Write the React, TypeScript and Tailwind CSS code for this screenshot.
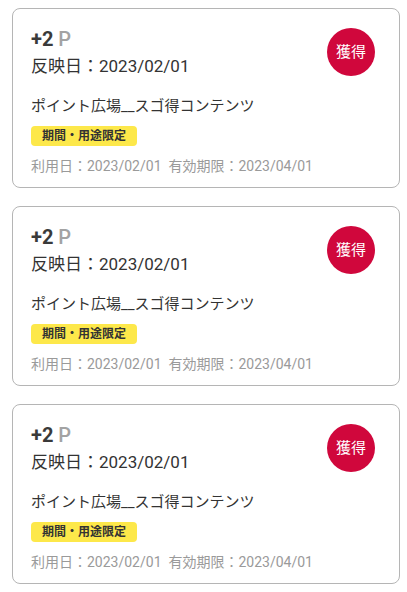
const items = [0, 1, 2].map(() => ({
  point: '+2',
  reflectDate: '2023/02/01',
  title: 'ポイント広場__スゴ得コンテンツ',
  tag: '期間・用途限定',
  useDate: '2023/02/01',
  expire: '2023/04/01',
}));

export default function App() {
  return (
    <div
      className="min-h-[592px] bg-white pl-3 pr-[7px] pt-2 flex flex-col gap-[18px]"
      style={{ fontFamily: 'Roboto, "Noto Sans CJK JP", sans-serif' }}
    >
      {items.map((item, idx) => (
        <div
          key={idx}
          className="h-[180px] rounded-lg border border-[#b5b5b5] pl-[18px] pr-6 pt-4 flex justify-between"
        >
          <div className="flex flex-col">
            <div className="text-[20px] leading-[28px] font-bold text-[#3a3a3a]">
              {item.point} <span className="text-[#a3a3a3] font-medium">P</span>
            </div>
            <div className="text-[17px] leading-[26px] text-[#333]">反映日：{item.reflectDate}</div>
            <div className="mt-[16px] text-[15px] leading-[22px] text-[#333]">{item.title}</div>
            <div className="mt-[9px] self-start rounded bg-[#fde84a] px-[11px] h-[20px] flex items-center text-[12px] font-bold text-[#333]">
              {item.tag}
            </div>
            <div className="mt-[9px] text-[14px] leading-[22px] text-[#9a9a9a] whitespace-pre">
              利用日：{item.useDate}  有効期限：{item.expire}
            </div>
          </div>
          <div className="shrink-0 mt-[3px] w-12 h-12 rounded-full bg-[#d0073c] flex items-center justify-center text-white text-[15px]">
            獲得
          </div>
        </div>
      ))}
    </div>
  );
}
